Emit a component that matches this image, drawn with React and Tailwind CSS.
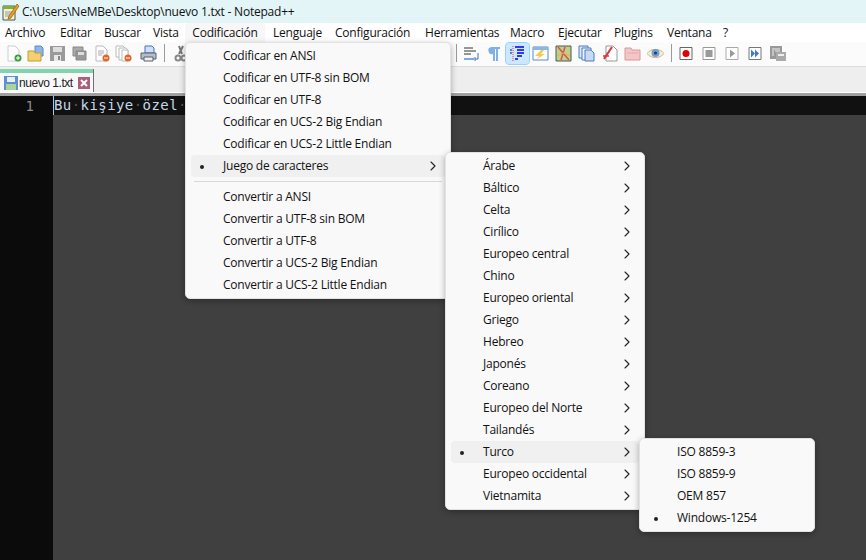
import { ChevronRight } from 'lucide-react';

const menuBar = [
  ['Archivo', 'w-[55px]'],
  ['Editar', 'w-[44px]'],
  ['Buscar', 'w-[49px]'],
  ['Vista', 'w-[39px]'],
];
const menuBar2 = [
  ['Lenguaje', 'w-[62px]'],
  ['Configuración', 'w-[90px]'],
  ['Herramientas', 'w-[85px]'],
  ['Macro', 'w-[48px]'],
  ['Ejecutar', 'w-[56px]'],
  ['Plugins', 'w-[53px]'],
  ['Ventana', 'w-[56px]'],
  ['?', 'w-[20px]'],
];

const charsets = ['Árabe', 'Báltico', 'Celta', 'Cirílico', 'Europeo central', 'Chino', 'Europeo oriental', 'Griego', 'Hebreo', 'Japonés', 'Coreano', 'Europeo del Norte', 'Tailandés', 'Turco', 'Europeo occidental', 'Vietnamita'];

function Item({ label, pad, dot, active, arrow }) {
  return (
    <div className={`relative flex h-[22px] items-center rounded-[4px] ${pad} ${active ? 'bg-[#f0f0f0]' : ''}`}>
      {dot && <span className="absolute top-[10px] left-[9px] h-[4px] w-[4px] rounded-full bg-[#222]" />}
      <span>{label}</span>
      {arrow && <ChevronRight size={16} strokeWidth={1.6} className="absolute top-[3px] right-[4px] text-[#222]" />}
    </div>
  );
}

function Btn({ children, active, narrow }) {
  return (
    <div className={`flex h-[21px] shrink-0 items-center justify-center rounded-[3px] ${narrow ? 'w-[22px]' : 'w-[23px]'} ${active ? 'bg-[#cce8ff] outline outline-[#99d1ff]' : ''}`}>
      <svg width="17" height="17" viewBox="0 0 17 17" fill="none">{children}</svg>
    </div>
  );
}

function Sep({ className }) {
  return <div className={`h-[18px] w-px shrink-0 bg-[#9a9a9a] ${className}`} />;
}

function Doc({ color = '#bbb' }) {
  return <path d="M3 1h7l4 4v11H3z" fill="#fff" stroke={color} />;
}

function Toolbar() {
  return (
    <div className="flex h-[25px] items-center border-b border-b-[#dcdcdc] bg-[#fbfbfb] pb-[2px] pl-[2px]">
      <Btn narrow><Doc color="#ccc" /><circle cx="13" cy="13" r="3.5" fill="#3f9b3f" /><path d="M11 13h4M13 11v4" stroke="#fff" /></Btn>
      <Btn narrow><path d="M8 1h6l2 2v8H8z" fill="#8cb6e6" stroke="#5b8ac6" /><path d="M1 6h6l1 2h6v8H1z" fill="#f6cf6e" stroke="#c89a3c" /></Btn>
      <Btn narrow><path d="M1 1h15v15H1z" fill="#9a9a9a" /><path d="M4 2h9v5H4z" fill="#ddd" /><path d="M5 10h7v6H5z" fill="#e8e8e8" /><path d="M9 11h2v4H9z" fill="#888" /></Btn>
      <Btn narrow><path d="M2 2h10v9H2z" fill="#aaa" stroke="#888" /><path d="M5 6h10v9H5z" fill="#999" stroke="#888" /><path d="M7 7h6v3H7z" fill="#ddd" /></Btn>
      <Btn narrow><Doc /><path d="M5 6h6M5 8h6M5 10h4" stroke="#aaa" /><circle cx="13" cy="13" r="3.5" fill="#e0662a" /><path d="M11 13h4" stroke="#fff" /></Btn>
      <Btn narrow><path d="M1 1h7l2 2v9H1z" fill="#fff" stroke="#bbb" /><path d="M4 3h7l2 2v10H4z" fill="#fff" stroke="#bbb" /><path d="M7 5h6v11H7z" fill="#fff" stroke="#bbb" /><circle cx="13" cy="13" r="3.5" fill="#e0662a" /><path d="M11 13h4" stroke="#fff" /></Btn>
      <div className="w-[3px] shrink-0" />
      <Btn><path d="M5 1h7l2 2v5H5z" fill="#cfe0f5" stroke="#3f73b5" /><path d="M1 8h15v6H1z" fill="#b5bdc8" stroke="#56606c" /><path d="M4 12h9v4H4z" fill="#eee" stroke="#56606c" /></Btn>
      <Sep className="mr-[4px] ml-[4px]" />
      <Btn><path d="M7 1l3 8M11 1L7 9" stroke="#777" strokeWidth="2" /><circle cx="6" cy="13" r="2.5" stroke="#888" strokeWidth="2" /><circle cx="12" cy="13" r="2.5" stroke="#888" strokeWidth="2" /></Btn>

      <div className="w-[264px] shrink-0" />
      <Sep className="mr-[3px]" />
      <Btn><path d="M1 3h9M1 6h12M1 9h7" stroke="#333" /><path d="M1 13h10v2H1z" fill="#7fa8dc" /><path d="M15 8v6h-3M12 12v4" stroke="#3f73b5" /></Btn>
      <Btn><path d="M5 2h9v2h-2v12h-2V4H9v12H7V9a3.5 3.5 0 0 1-2-7z" fill="#7fb0e6" /></Btn>
      <Btn active><path d="M6 2h9M8 5h7M8 8h7M8 11h5M6 14h3" stroke="#0000e0" strokeWidth="1.5" /><path d="M4 1v15" stroke="#e04040" strokeDasharray="1 1" /><path d="M1 5h2M1 8h2" stroke="#0000e0" /></Btn>
      <Btn><path d="M1 2h15v13H1z" fill="#fff" stroke="#5b8ac6" /><path d="M1 2h15v3H1z" fill="#8cb6e6" /><path d="M9 5l-6 6h4l-2 3 8-5H9l3-4z" fill="#f3c94f" /></Btn>
      <Btn><path d="M1 1h15v15H1z" fill="#b8d48a" stroke="#555" /><path d="M3 2l11 13M10 2L6 15" stroke="#e05050" strokeWidth="1.5" /><path d="M2 11l6-3 7 3" stroke="#e8b040" /></Btn>
      <Btn><path d="M1 1h9v12H1z" fill="#dbe8f8" stroke="#4a7cc0" /><path d="M4 3h9v12H4z" fill="#eef4fc" stroke="#4a7cc0" /><path d="M7 5h6l3 3v8H7z" fill="#c8daf3" stroke="#4a7cc0" /></Btn>
      <Btn><path d="M5 1h7l4 4v11H5z" fill="#fff" stroke="#999" /><path d="M11 2L3 14" stroke="#d43c3c" strokeWidth="2.2" /><path d="M2 11h6" stroke="#d43c3c" strokeWidth="1.5" /></Btn>
      <Btn><path d="M1 3h6l1 2h8v10H1z" fill="#f5c6c6" stroke="#d89a9a" /><path d="M3 8h11" stroke="#e8a8a8" /></Btn>
      <Btn><path d="M0 8.5C4 3 13 3 17 8.5 13 14 4 14 0 8.5z" fill="#f4efe2" stroke="#d8b078" /><circle cx="8.5" cy="8" r="4" fill="#6f9fd4" /><circle cx="8.5" cy="8" r="1.6" fill="#27405e" /></Btn>
      <Sep className="mr-[3px] ml-[4px]" />
      <Btn><path d="M2 2.5h12v12H2z" fill="#fff" stroke="#666" /><circle cx="8" cy="8.5" r="3.5" fill="#e00000" /></Btn>
      <Btn><path d="M2 2.5h12v12H2z" fill="#fff" stroke="#999" /><path d="M4.5 5h7v7h-7z" fill="#999" /></Btn>
      <Btn><path d="M2 2.5h12v12H2z" fill="#fff" stroke="#aaa" /><path d="M6 4.5l5 4-5 4z" fill="#999" /></Btn>
      <Btn><path d="M2 2.5h12v12H2z" fill="#fff" stroke="#777" /><path d="M4 4.5l4 4-4 4zM8 4.5l4 4-4 4z" fill="#3a7ad8" /></Btn>
      <Btn><path d="M0 1h12v13H0z" fill="#999" /><path d="M2 4h8M2 6h2M5 6h5M2 8h2M2 10h2" stroke="#eee" /><path d="M6 7h10v9H6z" fill="#aaa" /><path d="M8 9h6v2H8z" fill="#eee" /></Btn>
    </div>
  );
}

export default function App() {
  return (
    <div className="relative h-[560px] w-[866px] overflow-hidden bg-[#404040] font-['Open_Sans',sans-serif] text-[12px] tracking-[-0.22px] text-[#111]">
      <div className="flex h-[23px] items-center bg-[#e3f5f7]">
        <svg width="18" height="18" viewBox="0 0 18 18" className="ml-[2px] shrink-0">
          <path d="M1 3h12v14H1z" fill="#f4f1d0" stroke="#555" />
          <path d="M1 3h12v3H1z" fill="#7fb03c" />
          <path d="M3 9h7M3 11h7M3 13h5" stroke="#999" />
          <path d="M15 1L7 13l-1 3 3-1L17 3z" fill="#e8a020" stroke="#7a4a10" strokeWidth=".6" />
        </svg>
        <span className="ml-[2px] text-[#111]">C:\Users\NeMBe\Desktop\nuevo 1.txt - Notepad++</span>
      </div>

      <div className="flex h-[19px] items-center bg-white pl-[5px]">
        {menuBar.map(([label, w]) => <span key={label} className={`${w} shrink-0`}>{label}</span>)}
        <span className="ml-[-7px] flex h-[19px] w-[80px] shrink-0 items-center justify-center rounded-t-[3px] bg-[#f7f7f7]">Codificación</span>
        <span className="w-[8px] shrink-0" />
        {menuBar2.map(([label, w]) => <span key={label} className={`${w} shrink-0`}>{label}</span>)}
      </div>

      <Toolbar />

      <div className="h-[26px] border-b border-b-white bg-[#eeeeee] pt-[2px]">
        <div className="h-[23px] w-[94px] border-r border-r-[#707070] bg-[#f9f9f9]">
          <div className="h-[4px] bg-[#80d4b0]" />
          <div className="flex h-[19px] items-center pl-[4px] text-[#222]">
            <svg width="14" height="14" viewBox="0 0 14 14" className="shrink-0">
              <path d="M0 0h14v14H0z" fill="#5f8fd0" />
              <path d="M3 1h8v5H3z" fill="#e8f0fa" />
              <path d="M2 8h10v6H2z" fill="#a8d49a" />
            </svg>
            <span className="ml-[1px] font-['Liberation_Sans',sans-serif] text-[12px] tracking-[-0.45px]">nuevo 1.txt</span>
            <svg width="12" height="12" viewBox="0 0 12 12" className="ml-[5px] shrink-0">
              <path d="M0 0h12v12H0z" fill="#a8607c" />
              <path d="M3 3l6 6M9 3l-6 6" stroke="#fff" strokeWidth="2" />
            </svg>
          </div>
        </div>
      </div>

      <div className="h-[3px] bg-[#a0a0a0]" />

      <div className="flex h-[464px]">
        <div className="flex h-full w-[53px] shrink-0 justify-end bg-[#0b0b0b] pt-[1px] pr-[19px] font-['DejaVu_Sans_Mono',monospace] text-[14px] leading-[18px] tracking-normal text-[#8a8a8a]">1</div>
        <div className="min-w-0 flex-1">
          <div className="flex h-[19px] items-center border-l border-l-[#a8c8e0] bg-[#111] font-['DejaVu_Sans_Mono',monospace] text-[14px] tracking-[0.43px] whitespace-pre text-[#c4d8ea]">
            Bu<span className="text-[#555]">·</span>kişiye<span className="text-[#555]">·</span>özel<span className="text-[#555]">·</span>
          </div>
        </div>
      </div>

      {/* menu desplegable */}
      <div className="absolute top-[42px] left-[185px] w-[266px] rounded-[5px] border border-[#e2e2e2] bg-[#f9f9f9] px-[5px] py-[2px] shadow-[0_2px_6px_rgba(0,0,0,0.3)]">
        {['Codificar en ANSI', 'Codificar en UTF-8 sin BOM', 'Codificar en UTF-8', 'Codificar en UCS-2 Big Endian', 'Codificar en UCS-2 Little Endian'].map((t) => <Item key={t} label={t} pad="pl-[32px]" />)}
        <Item label="Juego de caracteres" pad="pl-[32px]" dot active arrow />
        <div className="mx-[3px] my-[4px] h-px bg-[#d8d8d8]" />
        {['Convertir a ANSI', 'Convertir a UTF-8 sin BOM', 'Convertir a UTF-8', 'Convertir a UCS-2 Big Endian', 'Convertir a UCS-2 Little Endian'].map((t) => <Item key={t} label={t} pad="pl-[32px]" />)}
      </div>

      <div className="absolute top-[152px] left-[445px] w-[200px] rounded-[5px] border border-[#e2e2e2] bg-[#f9f9f9] px-[5px] py-[2px] shadow-[0_2px_6px_rgba(0,0,0,0.3)]">
        {charsets.map((t) => <Item key={t} label={t} pad="pl-[32px]" dot={t === 'Turco'} active={t === 'Turco'} arrow />)}
      </div>

      <div className="absolute top-[438px] left-[639px] w-[176px] rounded-[5px] border border-[#e2e2e2] bg-[#f9f9f9] px-[5px] py-[2px] shadow-[0_2px_6px_rgba(0,0,0,0.3)]">
        {['ISO 8859-3', 'ISO 8859-9', 'OEM 857', 'Windows-1254'].map((t) => <Item key={t} label={t} pad="pl-[32px]" dot={t === 'Windows-1254'} />)}
      </div>
    </div>
  );
}
